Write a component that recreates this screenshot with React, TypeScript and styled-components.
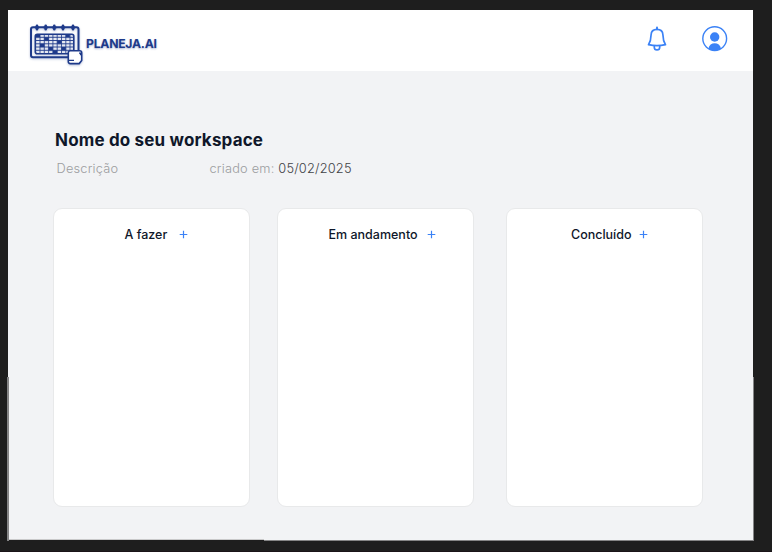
import React from "react";
import styled, { createGlobalStyle } from "styled-components";

const GlobalStyle = createGlobalStyle`
  * { box-sizing: border-box; }
  body { margin: 0; background: #1e1e1e; font-family: Inter, sans-serif; overflow: hidden; }
`;

const Canvas = styled.div`
  height: 552px;
  padding: 10px 18px 11px 8px;
  background:
    linear-gradient(#858586, #858586) 7px 377px / 2px 164px no-repeat,
    linear-gradient(#858586, #858586) 753px 377px / 1px 164px no-repeat,
    linear-gradient(#858586, #858586) 264px 540px / 490px 1px no-repeat,
    #1e1e1e;
  border-bottom: 1px solid #1a1418;
`;

const Screen = styled.div`
  display: flex;
  flex-direction: column;
  width: 745px;
  height: 530px;
  background:
    linear-gradient(#858586, #858586) 0 367px / 1px 163px no-repeat,
    linear-gradient(#c9c9ca, #c9c9ca) 0 529px / 256px 1px no-repeat,
    #f2f3f5;
`;

const Header = styled.header`
  display: flex;
  align-items: flex-start;
  justify-content: space-between;
  height: 61px;
  flex: none;
  padding: 12px 25px 0 20px;
  background: #fff;
`;

const Brand = styled.div`
  display: flex;
  align-items: flex-start;
  svg { filter: drop-shadow(0 1px 1px rgba(30, 58, 138, 0.3)); }
`;

const BrandName = styled.span`
  margin: 13px 0 0 2px;
  font-size: 12.2px;
  line-height: 18px;
  font-weight: 700;
  letter-spacing: -0.25px;
  color: #1e3a8a;
  text-shadow: 0 1px 2px rgba(30, 58, 138, 0.4);
`;

const Actions = styled.div`
  display: flex;
  gap: 35px;
  padding-top: 4px;
`;

const IconButton = styled.button`
  display: flex;
  padding: 0;
  border: 0;
  background: none;
  color: #3b82f6;
`;

const Main = styled.main`
  display: flex;
  flex: 1;
  flex-direction: column;
  padding: 57px 0 0 45px;
`;

const Title = styled.h1`
  margin: 0 0 0 2px;
  font-size: 17px;
  line-height: 24px;
  font-weight: 700;
  letter-spacing: 0.17px;
  color: #0f172a;
`;

const Meta = styled.div`
  display: grid;
  grid-template-columns: 153px auto;
  margin: 7px 0 0 3.5px;
  font-size: 12.8px;
  line-height: 20px;
  font-weight: 300;
  letter-spacing: 0.2px;
  color: #9c9da0;
`;

const MetaItem = styled.span`
  white-space: pre;
`;

const DateText = styled.time`
  color: #414246;
`;

const Board = styled.section`
  display: flex;
  align-items: flex-start;
  margin-top: 29px;
`;

const Column = styled.article<{ $before?: number; $inset: number }>`
  display: flex;
  align-items: flex-start;
  width: 197px;
  height: 299px;
  margin-left: ${(p) => p.$before ?? 0}px;
  padding: 15px 0 0 ${(p) => p.$inset}px;
  border: 1px solid #e8e9ea;
  border-radius: 9px;
  background: #fff;
`;

const ColumnTitle = styled.h2<{ $width: number }>`
  width: ${(p) => p.$width}px;
  margin: 1px 0 0;
  font-size: 12.5px;
  line-height: 20px;
  font-weight: 500;
  white-space: nowrap;
  color: #0f172a;
`;

const AddButton = styled(IconButton)`
  padding-top: 6px;
`;

const Logo = () => (
  <svg width="56" height="46" viewBox="0 0 56 46" fill="none" stroke="#1e3a8a">
    <rect x="3" y="5.2" width="47.5" height="30" rx="2" strokeWidth="2" />
    {[9, 17.7, 26.3, 35, 45].map((x) => (
      <path key={x} d={`M${x} 3.8v3.4M${x - 1} 5.5h2`} strokeWidth="2.6" strokeLinecap="round" />
    ))}
    <rect x="7.3" y="12.3" width="38.5" height="19.4" rx="2" strokeWidth="1.6" />
    <path d="M8 15.3h37M8 18.5h37M8 21.8h37M8 25h37M8 28.3h37" strokeWidth="0.9" />
    <path d="M12 12v19M16.3 12v19M20.6 12v19M24.9 12v19M29.2 12v19M33.5 12v19M37.8 12v19M42 12v19" strokeWidth="0.8" />
    <path
      fill="#1e3a8a"
      stroke="none"
      d="M8 12h4v3H8zM37.8 12h4v3h-4zM16.3 15.3h4.3v3.2h-4.3zM29.2 18.5h4.3v3.3h-4.3zM12 21.8h4.3V25H12zM20.6 25h4.3v3.3h-4.3zM33.5 25h4.3v3.3h-4.3zM24.9 28.3h4.3v3.2h-4.3z"
    />
    <path
      d="M42.3 28.8h9.4a2 2 0 0 1 2 2v7.6l-2.5 3.2H42.3a2 2 0 0 1-2-2v-8.8a2 2 0 0 1 2-2Z"
      fill="#fff"
      strokeWidth="1.6"
    />
    <path d="M40.5 38.3h5.5M51 31.2h1.5v2" strokeWidth="1.2" />
  </svg>
);

const Bell = () => (
  <svg width="20" height="26" viewBox="0 0 20 26" fill="none" stroke="currentColor" strokeWidth="1.7" strokeLinejoin="round">
    <path d="M10 3.2V1.6" strokeWidth="2" strokeLinecap="round" />
    <path d="M10 3.3c-3.6 0-5.8 2-5.9 5.4C4 13.5 3.4 15.8 1.5 18.7c5 1.2 12 1.2 17 0-1.9-2.9-2.5-5.2-2.6-10C15.8 5.3 13.6 3.3 10 3.3Z" />
    <path d="M7.3 19.8v1.4a2.7 2.7 0 0 0 5.4 0v-1.4" />
  </svg>
);

const Avatar = () => (
  <svg width="26" height="26" viewBox="0 0 26 26" fill="none">
    <circle cx="12.7" cy="12.6" r="11.9" stroke="currentColor" strokeWidth="1.4" />
    <circle cx="12.7" cy="11" r="4.7" fill="currentColor" />
    <path d="M6.3 22.7C7.2 18.9 9.5 17.2 12.7 17.2s5.5 1.7 6.4 5.5C15.5 25.1 9.9 25.1 6.3 22.7Z" fill="currentColor" />
  </svg>
);

const Plus = () => (
  <svg width="9" height="9" viewBox="0 0 9 9" stroke="currentColor" strokeWidth="1.2">
    <path d="M4.5 .7v7.6M.7 4.5h7.6" />
  </svg>
);

const columns = [
  { title: "A fazer", inset: 70.5, width: 54.5 },
  { title: "Em andamento", inset: 50.5, width: 98.5 },
  { title: "Concluído", inset: 64, width: 68 },
].map((c, i) => ({ ...c, before: [0, 27, 32][i] }));

export default function App() {
  return (
    <Canvas>
      <GlobalStyle />
      <Screen>
        <Header>
          <Brand>
            <Logo />
            <BrandName>PLANEJA.AI</BrandName>
          </Brand>
          <Actions>
            <IconButton aria-label="Notificações"><Bell /></IconButton>
            <IconButton aria-label="Perfil"><Avatar /></IconButton>
          </Actions>
        </Header>
        <Main>
          <Title>Nome do seu workspace</Title>
          <Meta>
            <MetaItem>Descrição</MetaItem>
            <MetaItem>criado em: <DateText>05/02/2025</DateText></MetaItem>
          </Meta>
          <Board>
            {columns.map((c) => (
              <Column key={c.title} $before={c.before} $inset={c.inset}>
                <ColumnTitle $width={c.width}>{c.title}</ColumnTitle>
                <AddButton aria-label={`Adicionar em ${c.title}`}><Plus /></AddButton>
              </Column>
            ))}
          </Board>
        </Main>
      </Screen>
    </Canvas>
  );
}
